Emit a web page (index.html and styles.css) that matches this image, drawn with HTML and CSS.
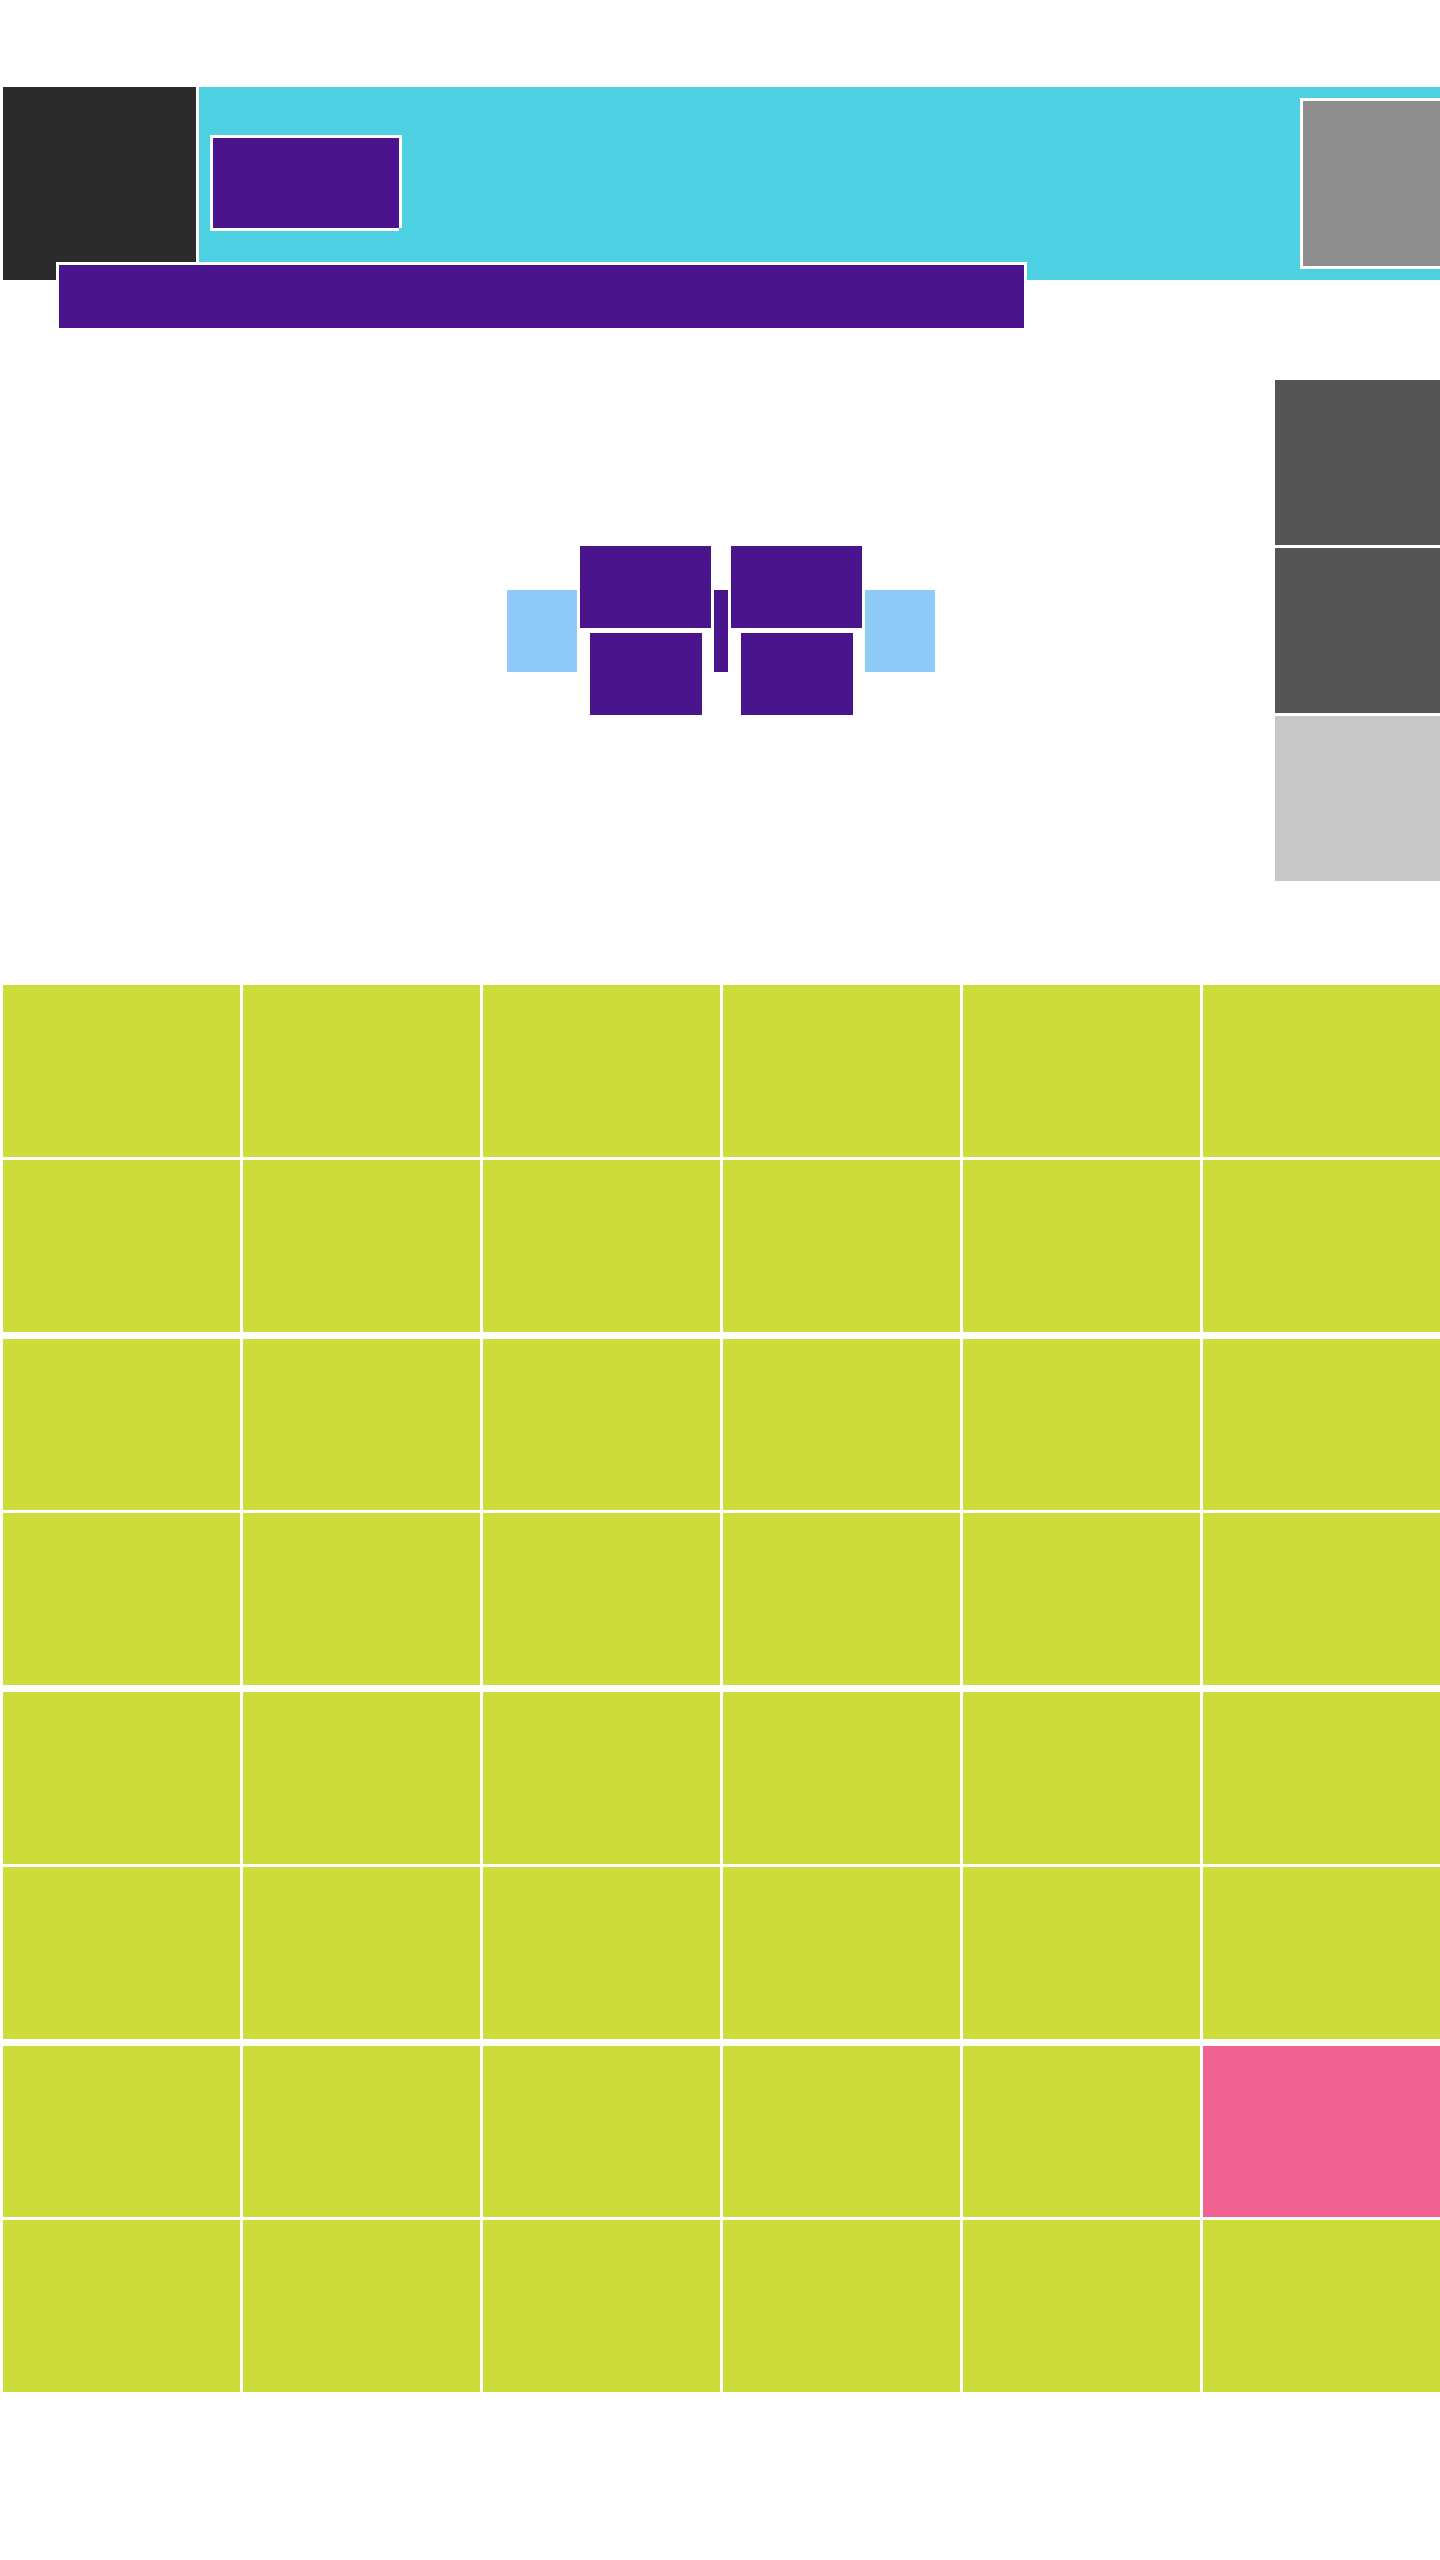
FILE: index.html
```html
<!DOCTYPE html>
<html lang="en">
<head>
<meta charset="utf-8">
<title>Layout</title>
<link rel="stylesheet" href="styles.css">
</head>
<body>
<div class="page">
  <header class="hdr">
    <div class="logo"></div>
    <div class="topbar">
      <div class="btn"></div>
      <div class="avatar"></div>
    </div>
  </header>
  <nav class="navbar"></nav>

  <section class="mid">
    <div class="main">
      <div class="cluster">
        <div class="side-tile"></div>
        <div class="col">
          <div class="big"></div>
          <div class="small"></div>
        </div>
        <div class="divider"></div>
        <div class="col">
          <div class="big"></div>
          <div class="small"></div>
        </div>
        <div class="side-tile"></div>
      </div>
    </div>
    <aside class="sidebar">
      <div class="sb-item dark"></div>
      <div class="sb-item dark"></div>
      <div class="sb-item light"></div>
    </aside>
  </section>

  <section class="grid">
    <div class="group">
      <div class="cell"></div><div class="cell"></div><div class="cell"></div><div class="cell"></div><div class="cell"></div><div class="cell"></div>
      <div class="cell"></div><div class="cell"></div><div class="cell"></div><div class="cell"></div><div class="cell"></div><div class="cell"></div>
    </div>
    <div class="group">
      <div class="cell"></div><div class="cell"></div><div class="cell"></div><div class="cell"></div><div class="cell"></div><div class="cell"></div>
      <div class="cell"></div><div class="cell"></div><div class="cell"></div><div class="cell"></div><div class="cell"></div><div class="cell"></div>
    </div>
    <div class="group">
      <div class="cell"></div><div class="cell"></div><div class="cell"></div><div class="cell"></div><div class="cell"></div><div class="cell"></div>
      <div class="cell"></div><div class="cell"></div><div class="cell"></div><div class="cell"></div><div class="cell"></div><div class="cell"></div>
    </div>
    <div class="group">
      <div class="cell"></div><div class="cell"></div><div class="cell"></div><div class="cell"></div><div class="cell"></div><div class="cell pink"></div>
      <div class="cell"></div><div class="cell"></div><div class="cell"></div><div class="cell"></div><div class="cell"></div><div class="cell"></div>
    </div>
  </section>
</div>
</body>
</html>
```

FILE: styles.css
```css
html, body {
  margin: 0;
  padding: 0;
  background: #ffffff;
}

.page {
  width: 1440px;
  overflow: hidden;
  padding-bottom: 168px;
}

/* header */
.hdr {
  display: flex;
  gap: 3px;
  padding-left: 3px;
  margin-top: 87px;
  height: 193px;
}

.logo {
  width: 193px;
  flex: none;
  background: #2b2b2b;
}

.topbar {
  flex: 1;
  display: flex;
  align-items: flex-start;
  background: #4dd0e1;
  overflow: hidden;
}

.btn {
  position: relative;
  flex: none;
  width: 186px;
  height: 90px;
  margin-left: 11px;
  margin-top: 48px;
  border: 3px solid #ffffff;
  background: #4a148c;
}

.btn::after {
  content: "";
  position: absolute;
  right: -3px;
  bottom: -3px;
  width: 3px;
  height: 3px;
  background: #4dd0e1;
}

.avatar {
  flex: none;
  width: 165px;
  height: 165px;
  margin-left: auto;
  margin-right: -31px;
  margin-top: 11px;
  border: 3px solid #ffffff;
  background: #8e8e8e;
}

.navbar {
  position: relative;
  width: 965px;
  height: 63px;
  margin-top: -18px;
  margin-left: 56px;
  border: 3px solid #ffffff;
  background: #4a148c;
}

/* middle */
.mid {
  display: flex;
  gap: 3px;
}

.main {
  flex: 1;
}

.cluster {
  display: flex;
  align-items: center;
  gap: 3px;
  margin-top: 215px;
  margin-left: 507px;
}

.side-tile {
  width: 70px;
  height: 82px;
  flex: none;
  background: #90caf9;
}

.col {
  width: 131px;
  display: flex;
  flex-direction: column;
  align-items: center;
  gap: 5px;
  flex: none;
}

.big {
  width: 131px;
  height: 82px;
  background: #4a148c;
}

.small {
  width: 112px;
  height: 82px;
  background: #4a148c;
}

.divider {
  width: 14px;
  height: 82px;
  flex: none;
  background: #4a148c;
}

.sidebar {
  width: 165px;
  flex: none;
  margin-top: 49px;
  display: flex;
  flex-direction: column;
  gap: 3px;
}

.sb-item {
  height: 165px;
}

.sb-item.dark {
  background: #555555;
}

.sb-item.light {
  background: #c7c7c7;
}

/* grid */
.grid {
  margin-top: 104px;
  padding-left: 3px;
  display: flex;
  flex-direction: column;
  gap: 7px;
}

.group {
  display: grid;
  grid-template-columns: repeat(6, 237px);
  grid-auto-rows: 171.75px;
  column-gap: 3px;
  row-gap: 3px;
}

.cell {
  background: #cddc39;
}

.cell.pink {
  background: #f06292;
}
```
